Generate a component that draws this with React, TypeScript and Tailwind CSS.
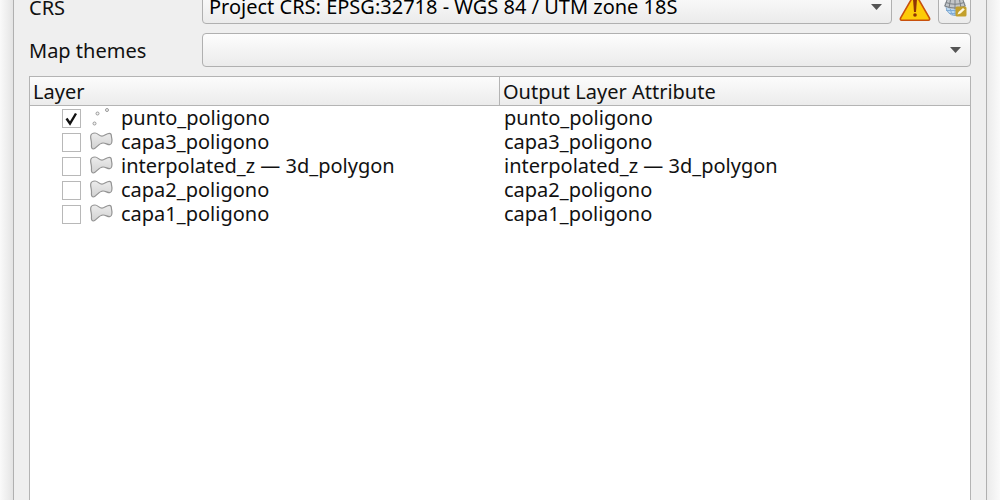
import React, { useState } from "react";

type Layer = {
  id: string;
  name: string;
  kind: "point" | "polygon";
};

const layers: Layer[] = [
  { id: "punto", name: "punto_poligono", kind: "point" },
  { id: "capa3", name: "capa3_poligono", kind: "polygon" },
  { id: "interpolated", name: "interpolated_z — 3d_polygon", kind: "polygon" },
  { id: "capa2", name: "capa2_poligono", kind: "polygon" },
  { id: "capa1", name: "capa1_poligono", kind: "polygon" },
];

const PointIcon = () => (
  <svg className="h-5 w-6 shrink-0" viewBox="0 0 24 20" fill="#f4f4f4" stroke="#999" aria-hidden="true">
    <circle cx="5.500" cy="15.500" r="1.500" />
    <circle cx="8.500" cy="5.500" r="1.500" />
    <circle cx="18" cy="2" r="1.500" />
  </svg>
);

const PolygonIcon = () => (
  <svg className="h-5 w-6 shrink-0" viewBox="0 0 24 20" aria-hidden="true">
    <defs>
      <linearGradient id="polygonFill" x1="0" y1="0" x2="0" y2="1">
        <stop offset="0" stopColor="#ececec" />
        <stop offset="1" stopColor="#d2d2d2" />
      </linearGradient>
    </defs>
    <path
      d="M1.700 4C2 1.800 3.500 1 6 1C9 1 10 4.200 13 4.200C15.500 4.200 17.500 1.300 20.500 1.300C23 1.300 22 3.800 22.700 6C23.300 8.500 23 12.600 20.800 12.700C18 12.800 17 11 14 11C9.500 11 7.500 16.600 4.300 17C2.300 17.100 2.300 14.500 2.500 12C2.700 9 1.300 7 1.700 4Z"
      fill="url(#polygonFill)"
      stroke="#949494"
      strokeWidth="1.200"
    />
  </svg>
);

const WarningIcon = () => (
  <svg className="h-8 w-8 shrink-0" viewBox="0 0 32 32" role="img" aria-label="Warning">
    <path
      d="M16 2L30.500 27.200Q31 29.200 29.500 29.200H2.500Q1 29.200 1.500 27.200Z"
      fill="#fdcb08"
      stroke="#c8500c"
      strokeWidth="1.600"
      strokeLinejoin="round"
    />
    <path d="M14 8H18L17 21H15Z" fill="#8f3306" />
    <circle cx="16" cy="24" r="1.800" fill="#8f3306" />
  </svg>
);

const GlobeIcon = () => (
  <svg className="h-6 w-6" viewBox="0 0 24 24" aria-hidden="true">
    <circle cx="12" cy="11.500" r="9" fill="#b9d8f2" stroke="#86a9cb" />
    <path d="M3 15.500H21M6 18.500H18M12 13V20M7 13Q8 18 10 20M17 13Q16 18 14 20" fill="none" stroke="#7fabd6" />
    <path d="M1 11Q3 2 12 1Q21 2 23 11L18 13.500L12 14.500L6 13.500Z" fill="#c3c6c9" />
    <path
      d="M1.500 11Q12 15 22.500 11M3 7.500Q12 11 21 7.500M12 1V14M8 2L6 13M16 2L18 13M4 5L2 11M20 5L22 11"
      fill="none"
      stroke="#7c8186"
    />
    <rect x="12.500" y="11.500" width="11" height="10" rx="1.500" fill="#c3a02c" />
    <path d="M14.500 19.500L15.500 17L20 13L21.800 14.500L17.500 18.500Z" fill="#fff8dc" />
  </svg>
);

type ComboProps = {
  id: string;
  children: React.ReactNode;
};

const Combo = ({ id, children }: ComboProps) => (
  <div className="relative min-w-0 flex-1">
    <select
      id={id}
      className="block h-[34px] w-full appearance-none rounded border border-[#b0b0b0] bg-linear-to-b from-[#fdfdfd] to-[#ebebeb] pr-8 pl-[6px] text-black"
    >
      {children}
    </select>
    <svg
      className="pointer-events-none absolute top-[14px] right-[10px] h-[6px] w-[11px]"
      viewBox="0 0 11 6"
      aria-hidden="true"
    >
      <path d="M0 0H11L5.500 6Z" fill="#555" />
    </svg>
  </div>
);

export default function App() {
  const [checked, setChecked] = useState<string[]>(["punto"]);

  const toggle = (id: string) => {
    setChecked((prev) => (prev.includes(id) ? prev.filter((c) => c !== id) : [...prev, id]));
  };

  return (
    <div className="flex h-screen overflow-hidden bg-white font-['Noto_Sans','Open_Sans',sans-serif] text-[20px] text-[#111]">
      {/* WINDOW EDGE */}
      <div className="w-[13px] shrink-0 bg-linear-to-r from-[#fafafa] to-[#e4e4e4]" />

      <div className="flex min-w-0 flex-1 flex-col border-x border-[#b0b0b0] bg-[#efefef] px-[15px]">
        {/* FORM, scrolled so the first row is partly out of view */}
        <div className="-mt-[10px] flex flex-col gap-[9px]">
          <div className="flex h-[34px] items-center">
            <label htmlFor="crs" className="w-[173px] shrink-0 pt-0.5 leading-6">
              CRS
            </label>
            <Combo id="crs">
              <option>Project CRS: EPSG:32718 - WGS 84 / UTM zone 18S</option>
            </Combo>
            <div className="flex items-center gap-[7px] pl-[7px]">
              <WarningIcon />
              <button
                type="button"
                aria-label="Select CRS"
                className="flex h-[34px] w-[33px] items-center justify-center rounded border border-[#b0b0b0] bg-linear-to-b from-[#fdfdfd] to-[#ebebeb]"
              >
                <GlobeIcon />
              </button>
            </div>
          </div>

          <div className="flex h-[34px] items-center">
            <label htmlFor="themes" className="w-[173px] shrink-0 pt-0.5 leading-6">
              Map themes
            </label>
            <Combo id="themes">
              <option value=""></option>
            </Combo>
          </div>
        </div>

        {/* LAYERS */}
        <div className="mt-[9px] flex-1 border border-b-0 border-[#b4b4b4] bg-white">
          <table className="w-full table-fixed border-separate border-spacing-0">
            <thead>
              <tr className="bg-linear-to-b from-[#fcfcfc] to-[#ebebeb]">
                <th className="w-1/2 border-r border-b border-[#b4b4b4] p-0 pt-0.5 pl-[3px] text-left leading-[26px] font-normal">
                  Layer
                </th>
                <th className="w-1/2 border-b border-[#b4b4b4] p-0 pt-0.5 pl-[3px] text-left leading-[26px] font-normal">
                  Output Layer Attribute
                </th>
              </tr>
            </thead>
            <tbody>
              {layers.map((layer) => (
                <tr key={layer.id} className="leading-6 whitespace-nowrap">
                  <td className="p-0">
                    <div className="flex h-6 items-center pl-8">
                      <span className="relative flex shrink-0">
                        <input
                          id={layer.id}
                          type="checkbox"
                          checked={checked.includes(layer.id)}
                          onChange={() => toggle(layer.id)}
                          className="peer size-[19px] appearance-none border border-[#b8b8b8] bg-white"
                        />
                        <svg
                          className="pointer-events-none invisible absolute inset-0 size-[19px] peer-checked:visible"
                          viewBox="0 0 19 19"
                          aria-hidden="true"
                        >
                          <path d="M4.500 9.500L8 14.500L14 4.500" fill="none" stroke="#111" strokeWidth="2.400" />
                        </svg>
                      </span>
                      <span className="flex px-2">
                        {layer.kind === "point" ? <PointIcon /> : <PolygonIcon />}
                      </span>
                      <label htmlFor={layer.id}>{layer.name}</label>
                    </div>
                  </td>
                  <td className="p-0 pl-1">{layer.name}</td>
                </tr>
              ))}
            </tbody>
          </table>
        </div>
      </div>

      <div className="w-[13px] shrink-0 bg-linear-to-r from-[#ebebeb] to-[#fafafa]" />
    </div>
  );
}
